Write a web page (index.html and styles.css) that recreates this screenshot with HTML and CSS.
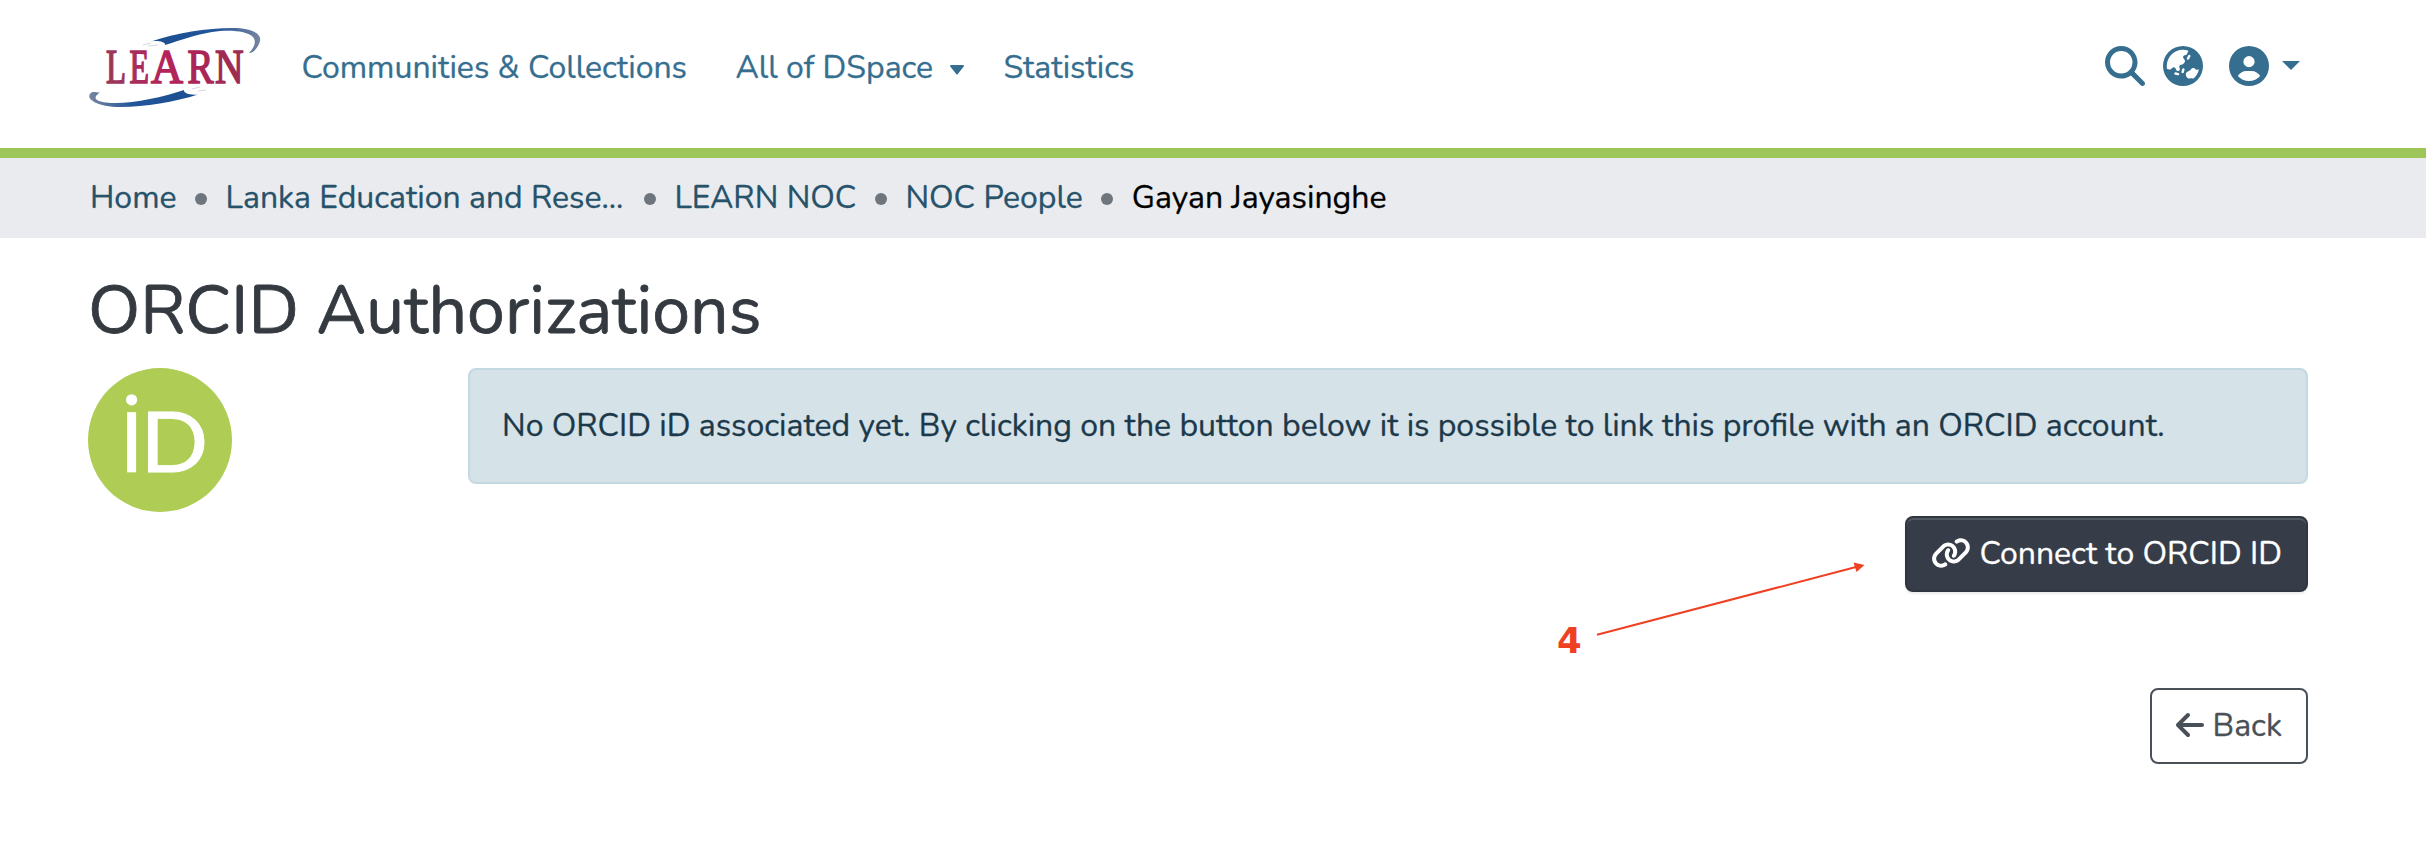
FILE: index.html
```html
<!DOCTYPE html>
<html lang="en">
<head>
<meta charset="utf-8">
<title>ORCID Authorizations</title>
<link rel="stylesheet" href="styles.css">
</head>
<body>
<header class="header">
  <a class="logo" href="#" aria-label="LEARN">
    <svg width="180" height="90" viewBox="84 22 180 90">
      <defs>
        <linearGradient id="swoosh-top" x1="0" x2="1"><stop offset="0" stop-color="#1c4f90"/><stop offset=".6" stop-color="#22559a"/><stop offset="1" stop-color="#77859f"/></linearGradient>
        <linearGradient id="swoosh-bottom" x1="0" x2="1"><stop offset="0" stop-color="#77859f"/><stop offset=".4" stop-color="#22559a"/><stop offset="1" stop-color="#1c4f90"/></linearGradient>
        <linearGradient id="word" gradientUnits="userSpaceOnUse" x1="106" y1="0" x2="243" y2="0"><stop offset="0" stop-color="#98385a"/><stop offset=".45" stop-color="#b5225c"/><stop offset="1" stop-color="#9a2d50"/></linearGradient>
      </defs>
      <path fill="url(#swoosh-top)" d="M151 41.500C176 33 207 28 232 28C252 28 262 34 260 41C259 46 254 53 249 53C254 48 257 42 253 37C247 31 230 29.500 212 32C195 35 181 40 165 45C166 42 158 40 151 41.500Z"/>
      <path fill="url(#swoosh-bottom)" d="M198 94.500C175 102 145 107 121 107C97 107 86 99 90 94C92 90 97 93 100 92.500C93 97 94 101 106 102.500C127 105 160 98 184 90C183 93 190 95.500 198 94.500Z"/>
      <path fill="none" stroke="#d5d9de" stroke-width="1" d="M143 45l8-2M148 46l10-1M192 89l8-2M198 91l8-1"/>
      <g class="logo-word">
        <text x="106" y="83" textLength="20" lengthAdjust="spacingAndGlyphs">L</text>
        <text x="129.500" y="83" textLength="19.500" lengthAdjust="spacingAndGlyphs">E</text>
        <text x="151" y="83" textLength="32" lengthAdjust="spacingAndGlyphs">A</text>
        <text x="187.500" y="83" textLength="26" lengthAdjust="spacingAndGlyphs">R</text>
        <text x="215" y="83" textLength="28.500" lengthAdjust="spacingAndGlyphs">N</text>
      </g>
    </svg>
  </a>
  <nav class="nav">
    <a class="nav-communities" href="#">Communities &amp; Collections</a>
    <a class="nav-all" href="#">All of DSpace<svg class="nav-caret" viewBox="0 0 16 10"><path d="M2 1H14L8 8.500Z"/></svg></a>
    <a class="nav-stats" href="#">Statistics</a>
  </nav>
  <div class="tools">
    <svg class="icon tool-search" viewBox="0 0 512 512"><path d="M416 208c0 45.900-14.900 88.300-40 122.700L502.600 457.400c12.500 12.500 12.500 32.800 0 45.300s-32.800 12.500-45.300 0L330.700 376c-34.400 25.200-76.800 40-122.700 40C93.100 416 0 322.900 0 208S93.100 0 208 0S416 93.100 416 208zM208 352a144 144 0 1 0 0-288 144 144 0 1 0 0 288z"/></svg>
    <svg class="icon tool-language" viewBox="0 0 512 512"><path d="M51.700 295.100l31.700 6.300c7.900 1.600 16-.9 21.700-6.600l15.400-15.400c11.600-11.600 31.100-8.400 38.400 6.200l9.300 18.500c4.800 9.600 14.600 15.700 25.400 15.700c15.200 0 26.100-14.600 21.700-29.200l-6-19.900c-4.600-15.400 6.900-30.900 23-30.900h2.300c13.400 0 25.900-6.700 33.300-17.800l10.700-16.100c5.600-8.500 5.300-19.600-.8-27.700l-16.100-21.500c-10.300-13.700-3.300-33.500 13.400-37.700l17-4.300c7.500-1.900 13.600-7.200 16.500-14.400l16.400-40.900C303.400 52.100 280.200 48 256 48C141.100 48 48 141.100 48 256c0 13.400 1.300 26.500 3.700 39.100zm407.700 4.600c-3-.3-6-.1-9 .8l-15.800 4.400c-6.700 1.900-13.800-.9-17.500-6.700l-2-3.100c-6-9.400-16.400-15.100-27.600-15.100s-21.600 5.700-27.600 15.100l-6.100 9.500c-1.400 2.200-3.400 4.100-5.700 5.300L312 330.100c-18.100 10.100-25.500 32.400-17 51.300l5.500 12.400c8.600 19.200 30.700 28.500 50.500 21.100l2.600-1c10-3.700 21.300-2.200 29.900 4.100l1.500 1.100c37.200-29.500 64.100-71.400 74.400-119.500zM0 256a256 256 0 1 1 512 0A256 256 0 1 1 0 256zm144.500 92.100c-2.100 8.600 3.100 17.300 11.600 19.400l32 8c8.600 2.100 17.300-3.100 19.400-11.600s-3.100-17.300-11.600-19.400l-32-8c-8.600-2.100-17.300 3.100-19.400 11.600zm92-20c-2.100 8.600 3.100 17.300 11.600 19.400s17.300-3.100 19.400-11.600l8-32c2.100-8.600-3.100-17.300-11.600-19.400s-17.300 3.100-19.400 11.600l-8 32zM343.200 113.700c-7.900-4-17.500-.7-21.500 7.200l-16 32c-4 7.900-.7 17.500 7.200 21.500s17.500 .7 21.500-7.200l16-32c4-7.900 .7-17.500-7.200-21.500z"/></svg>
    <svg class="icon tool-user" viewBox="0 0 512 512"><path d="M399 384.200C376.900 345.800 335.400 320 288 320H224c-47.400 0-88.900 25.800-111 64.200c35.200 39.200 86.200 63.800 143 63.800s107.800-24.700 143-63.800zM0 256a256 256 0 1 1 512 0A256 256 0 1 1 0 256zm256 16a72 72 0 1 0 0-144 72 72 0 1 0 0 144z"/></svg>
    <i class="caret-user"></i>
  </div>
</header>
<nav class="breadcrumbs">
  <a href="#">Home</a><i class="dot"></i>
  <a href="#">Lanka Education and Rese...</a><i class="dot dot-wide"></i>
  <a href="#">LEARN NOC</a><i class="dot"></i>
  <a href="#">NOC People</a><i class="dot"></i>
  <span class="current">Gayan Jayasinghe</span>
</nav>
<main class="main">
  <h1 class="title">ORCID Authorizations</h1>
  <div class="row">
    <svg class="orcid" viewBox="0 0 256 256">
      <circle cx="128" cy="128" r="128" fill="#afcd54"/>
      <circle cx="77.500" cy="56.500" r="10" fill="#fff"/>
      <rect x="69.500" y="78.500" width="16" height="107" fill="#fff"/>
      <text class="orcid-letter" x="93" y="185" textLength="121" lengthAdjust="spacingAndGlyphs">D</text>
    </svg>
    <div class="content">
      <div class="alert">No ORCID iD associated yet. By clicking on the button below it is possible to link this profile with an ORCID account.</div>
      <button class="btn btn-connect">
        <svg class="link-icon" viewBox="0 0 640 512"><path d="M579.800 267.700c56.500-56.500 56.500-148 0-204.500c-50-50-128.800-56.500-186.300-15.400l-1.600 1.100c-14.400 10.300-17.700 30.300-7.400 44.600s30.300 17.700 44.600 7.400l1.600-1.100c32.100-22.900 76-19.300 103.800 8.600c31.500 31.500 31.500 82.500 0 114L422.300 334.800c-31.500 31.500-82.500 31.500-114 0c-27.900-27.900-31.500-71.800-8.600-103.800l1.100-1.600c10.300-14.400 6.900-34.400-7.400-44.600s-34.400-6.900-44.600 7.400l-1.100 1.600C206.500 251.200 213 330 263 380c56.500 56.500 148 56.500 204.500 0L579.800 267.700zM60.200 244.300c-56.500 56.500-56.500 148 0 204.500c50 50 128.800 56.500 186.300 15.400l1.600-1.100c14.400-10.300 17.700-30.300 7.400-44.600s-30.300-17.700-44.600-7.400l-1.600 1.100c-32.100 22.900-76 19.300-103.800-8.600C74 372 74 321 105.500 289.500L217.700 177.200c31.500-31.500 82.500-31.500 114 0c27.900 27.900 31.500 71.800 8.600 103.900l-1.100 1.600c-10.300 14.400-6.900 34.400 7.400 44.600s34.400 6.900 44.600-7.400l1.100-1.600C433.500 260.800 427 182 377 132c-56.500-56.500-148-56.500-204.500 0L60.200 244.300z"/></svg>
        <span>Connect to ORCID ID</span>
      </button>
      <button class="btn btn-back">
        <svg class="back-icon" viewBox="0 0 448 512"><path d="M9.400 233.400c-12.500 12.500-12.500 32.800 0 45.300l160 160c12.500 12.500 32.800 12.500 45.300 0s12.500-32.800 0-45.300L109.200 288 416 288c17.700 0 32-14.300 32-32s-14.300-32-32-32l-306.700 0L214.600 118.600c12.500-12.500 12.500-32.800 0-45.300s-32.800-12.500-45.300 0l-160 160z"/></svg>
        <span>Back</span>
      </button>
    </div>
  </div>
</main>
<svg class="annotation" width="320" height="110" viewBox="1550 555 320 110">
  <text class="annotation-number" x="1557" y="653">4</text>
  <path d="M1597 634.800L1856 567" stroke="#ee4023" stroke-width="2"/>
  <path d="M1864.500 565l-11-2.500 3 9.500z" fill="#ee4023"/>
</svg>
</body>
</html>
```
FILE: styles.css
```css
* { box-sizing: border-box; }
body {
  margin: 0;
  min-height: 852px;
  background: #fff;
  color: #343a40;
  font: 32px/48px Nunito, Lato, "Open Sans", sans-serif;
  -webkit-text-stroke: .3px currentColor;
}
a { color: inherit; text-decoration: none; white-space: nowrap; }
svg { -webkit-text-stroke: 0; }
svg, i { display: block; flex: none; }
.header {
  display: flex;
  align-items: flex-start;
  height: 158px;
  padding: 22px 126px 0 84px;
  border-bottom: 10px solid #9dc55a;
  color: #356e8f;
}
.nav { display: flex; padding: 22px 0 0 37.500px; }
.nav a { display: flex; align-items: center; }
.nav-communities { width: 434px; }
.nav-all { width: 268px; }
.nav-caret {
  width: 16px;
  height: 10px;
  margin: 3px 0 0 15.500px;
  fill: currentColor;
  stroke: currentColor;
  stroke-width: 2px;
  stroke-linejoin: round;
}
.tools { display: flex; align-items: center; margin-left: auto; padding-top: 24px; }
.icon { width: 40px; height: 40px; fill: currentColor; }
.tool-language { margin-left: 18px; }
.tool-user { margin-left: 26px; }
.caret-user {
  margin: -2px 0 0 13px;
  border: solid transparent;
  border-width: 9px 9px 0;
  border-top-color: currentColor;
}
.breadcrumbs {
  display: flex;
  align-items: center;
  height: 80px;
  padding: 0 88px 0 90px;
  background: #eaebef;
  color: #26526a;
}
.dot { width: 12px; height: 12px; margin: 2px 18.500px 0; border-radius: 50%; background: #6f757c; }
.dot-wide { margin: 2px 18.500px 0 20.500px; }
.current { color: #000; }
.main { padding: 31px 118px 0 88px; }
.title { margin: 0 0 15px; font-size: 68px; line-height: 84px; font-weight: 400; -webkit-text-stroke-width: .8px; }
.row { display: flex; }
.orcid { width: 144px; height: 144px; }
.orcid-letter { font: 148px Lato, sans-serif; fill: #fff; stroke: #fff; stroke-width: 1.500px; }
.content { display: flex; flex-direction: column; align-items: flex-end; width: 1840px; margin-left: auto; }
.alert {
  width: 100%;
  height: 116px;
  padding: 32px;
  border: 2px solid #c3d8e0;
  border-radius: 8px;
  background: #d5e2e8;
  color: #1b394a;
}
.btn {
  display: flex;
  align-items: center;
  height: 76px;
  padding: 0 24px;
  border-radius: 8px;
  font: inherit;
  white-space: nowrap;
}
.btn-connect {
  width: 403px;
  margin-top: 32px;
  border: 2px solid #303640;
  background: #363d48;
  color: #fff;
  box-shadow: inset 0 2px 0 rgba(255, 255, 255, .15), 0 2px 2px rgba(0, 0, 0, .075);
}
.btn-back { width: 158px; margin-top: 96px; border: 2px solid #495057; background: #fff; color: #495057; }
.link-icon { width: 40px; height: 32px; margin: -2px 8.500px 0 0; fill: currentColor; }
.back-icon { width: 28px; height: 32px; margin: -2px 8.500px 0 0; fill: currentColor; }
.logo-word { font: 47.500px "Liberation Serif", serif; fill: url(#word); stroke: url(#word); stroke-width: 1.600px; }
.annotation { position: absolute; left: 1550px; top: 555px; }
.annotation-number { font: bold 35.500px "DejaVu Sans", sans-serif; fill: #ee4023; }
```
